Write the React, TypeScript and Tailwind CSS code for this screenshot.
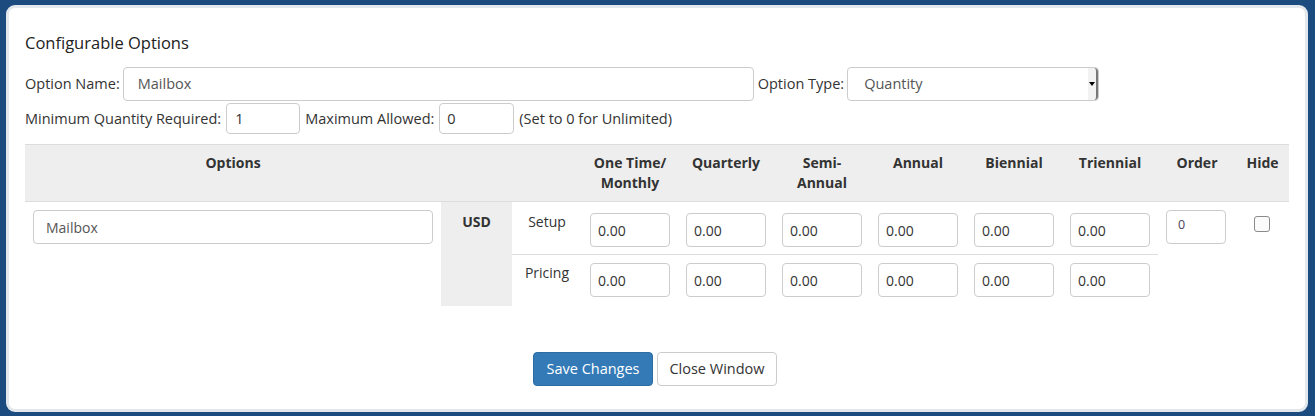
const periods = ["One Time/ Monthly", "Quarterly", "Semi- Annual", "Annual", "Biennial", "Triennial"];

const PriceInput = ({ value = "0.00" }: { value?: string }) => {
  return (
    <div className="flex h-[34px] w-[80px] items-center rounded border border-[#ccc] bg-white pl-[7px] pt-[1px] text-[14px] text-[#333]">
      {value}
    </div>
  );
};

const HeadCell = ({ label }: { label: string }) => {
  const parts = label.split(" ");
  const lines = label.startsWith("One") ? ["One Time/", "Monthly"] : label.startsWith("Semi") ? ["Semi-", "Annual"] : parts;
  return (
    <th className="px-2 pt-2 pb-[8px] align-top text-[14px] font-bold leading-5 text-[#333]">
      {lines.map((l) => (
        <div key={l}>{l}</div>
      ))}
    </th>
  );
};

export default function App() {
  return (
    <div className="h-[416px] w-[1315px] bg-[#1b4b7f] pt-[5px] pr-[7px] pb-[4px] pl-[6px] font-['Open_Sans',sans-serif]">
      <div className="h-full w-full rounded-[9px] border-[3px] border-[#e3e8ed] bg-white pl-[16px] pt-[24px]">
        <h2 className="text-[16.5px] leading-[22px] text-[#222]">Configurable Options</h2>

        <div className="mt-[13px] flex items-center gap-[3px] text-[14.5px] text-[#333]">
          <span>Option Name:</span>
          <div className="flex h-[34px] w-[631px] items-center rounded border border-[#ccc] pl-[14px] text-[#555]">
            Mailbox
          </div>
          <span className="ml-[1px]">Option Type:</span>
          <div className="flex h-[34px] w-[252px] items-center rounded border border-[#ccc] pl-[16px] text-[#555]">
            <span className="flex-1">Quantity</span>
            <div className="flex h-full w-[10px] items-center justify-center rounded-r border-r-2 border-[#777] bg-[#f2f2f2]">
              <div className="h-0 w-0 border-x-[3px] border-t-[4px] border-x-transparent border-t-black" />
            </div>
          </div>
        </div>

        <div className="mt-[2px] flex items-center gap-[5px] text-[14.5px] text-[#333]">
          <span>Minimum Quantity Required:</span>
          <div className="flex h-[31px] w-[74px] items-center rounded border border-[#ccc] pl-[8px]">1</div>
          <span>Maximum Allowed:</span>
          <div className="flex h-[31px] w-[75px] items-center rounded border border-[#ccc] pl-[7px]">0</div>
          <span>(Set to 0 for Unlimited)</span>
        </div>

        <table className="mt-[10px] w-[1264px] table-fixed border-collapse text-[14px] text-[#333]">
          <colgroup>
            <col className="w-[416px]" />
            <col className="w-[71px]" />
            <col className="w-[70px]" />
            {periods.map((p) => (
              <col key={p} className="w-[96px]" />
            ))}
            <col className="w-[78px]" />
            <col className="w-[53px]" />
          </colgroup>
          <thead>
            <tr className="border-t border-b border-[#dcdcdc] bg-[#eeeeee]">
              <th className="pt-2 pb-[8px] align-top font-bold leading-5">Options</th>
              <th />
              <th />
              {periods.map((p) => (
                <HeadCell key={p} label={p} />
              ))}
              <HeadCell label="Order" />
              <HeadCell label="Hide" />
            </tr>
          </thead>
          <tbody>
            <tr className="h-[53px]">
              <td rowSpan={2} className="px-2 pt-[8px] align-top">
                <div className="flex h-[34px] w-[400px] items-center rounded border border-[#ccc] pl-[12px] text-[#555]">
                  Mailbox
                </div>
              </td>
              <td rowSpan={2} className="bg-[#eeeeee] pt-[10px] text-center align-top font-bold leading-5">
                USD
              </td>
              <td className="border-b border-[#ddd] pt-[10px] text-center align-top leading-5">Setup</td>
              {periods.map((p) => (
                <td key={p} className="border-b border-[#ddd] px-2 pt-[11px] align-top">
                  <PriceInput />
                </td>
              ))}
              <td rowSpan={2} className="px-2 pt-[8px] align-top">
                <div className="flex h-[34px] w-[60px] items-center rounded border border-[#ccc] pb-[3px] pl-[11px] text-[12.5px] text-[#445]">
                  0
                </div>
              </td>
              <td rowSpan={2} className="pt-[14px] align-top">
                <div className="ml-[18px] h-[16px] w-[16px] rounded-[3px] border border-[#8a8a8a] bg-[#fbfbfb]" />
              </td>
            </tr>
            <tr className="h-[51px]">
              <td className="pt-[8px] text-center align-top leading-5">Pricing</td>
              {periods.map((p) => (
                <td key={p} className="px-2 pt-[8px] align-top">
                  <PriceInput />
                </td>
              ))}
            </tr>
          </tbody>
        </table>

        <div className="mt-[46px] flex w-[1264px] justify-center gap-[4px] pr-[4px] text-[14.5px]">
          <button className="h-[34px] w-[120px] rounded border border-[#2e6da4] bg-[#337ab7] text-white">
            Save Changes
          </button>
          <button className="h-[34px] w-[120px] rounded border border-[#ccc] bg-white text-[#333]">
            Close Window
          </button>
        </div>
      </div>
    </div>
  );
}
